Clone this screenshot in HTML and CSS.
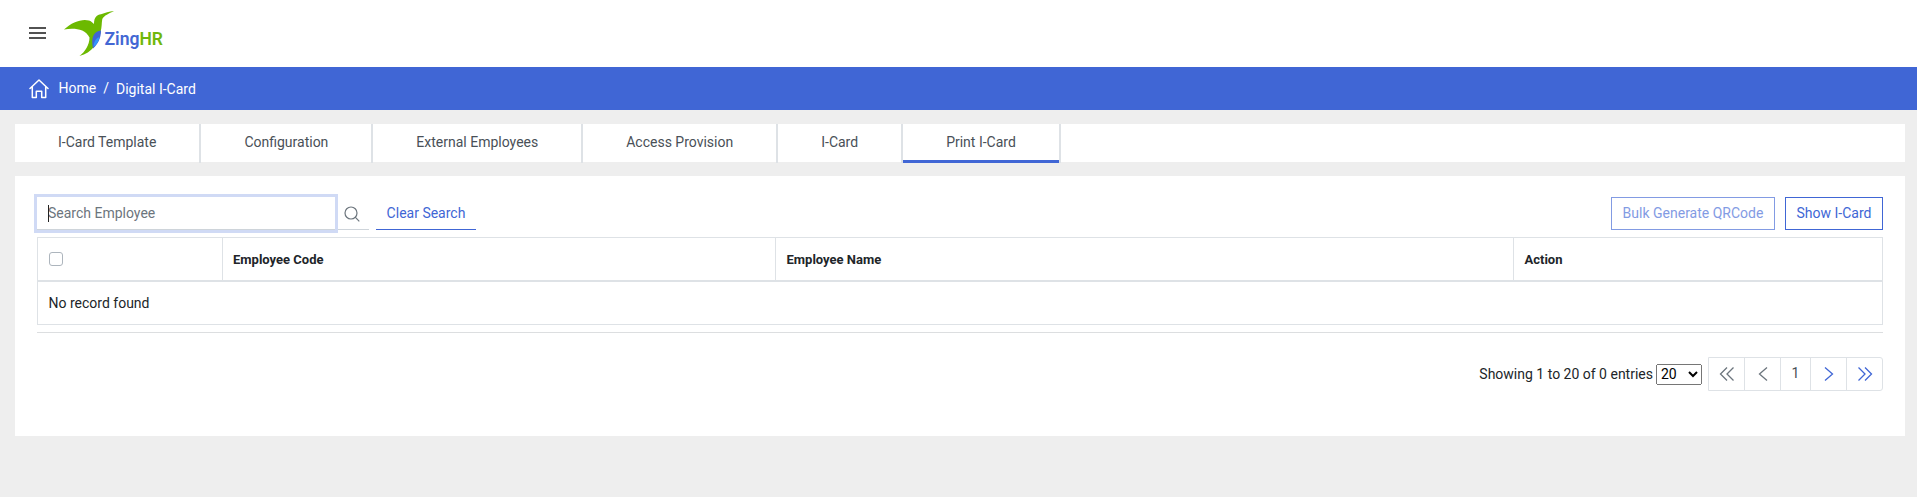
FILE: index.html
```html
<!DOCTYPE html>
<html lang="en">
<head>
<meta charset="utf-8">
<title>Digital I-Card</title>
<link rel="stylesheet" href="styles.css">
</head>
<body>
<header class="topbar">
  <button class="menu" aria-label="Menu"><svg width="17" height="12" viewBox="0 0 17 12" stroke="#1a1a1a" stroke-width="1.700"><path d="M0 1H17M0 6H17M0 11H17"/></svg></button>
  <svg class="logo" width="110" height="50" viewBox="0 0 110 50">
    <path fill="#6cb900" d="M0 19.500C8 12 18 8.500 25 10.500C27 11 28.500 12.500 30 14C30 7 33 4.500 37 4.200C41 3 45 1.500 50 1C45 3.500 40 5.500 38.300 9C37.500 13 38 17 36.500 22C35 32 28 43 15.500 46C21 42 25.500 35 25.500 27.500C21 18.500 10 18 0 19.500Z"/>
    <path fill="#4064d4" d="M37 20.500C30 21.500 26.500 27 29 38.500C34 34 37 28 37 20.500Z"/>
    <path fill="#3296f8" d="M35.500 27C32 28 29.500 32 29.500 37C33 34 35 31 35.500 27Z"/>
    <text x="40.500" y="34.500" textLength="58.500" lengthAdjust="spacingAndGlyphs" class="logo-text"><tspan fill="#4367d4">Zing</tspan><tspan fill="#70b70a">HR</tspan></text>
  </svg>
</header>
<nav class="crumbs">
  <svg width="20" height="20" viewBox="0 0 20 20" fill="none" stroke="#fff" stroke-width="1.500" stroke-linejoin="round" stroke-linecap="round"><path d="M1 9.500L10 1L19 9.500M3.300 7.800V18.500H7.300V12.200H12.700V18.500H16.700V7.800"/></svg>
  <a class="home">Home</a><span class="slash">/</span><span class="current">Digital I-Card</span>
</nav>
<ul class="tabs">
  <li>I-Card Template</li><li>Configuration</li><li>External Employees</li><li>Access Provision</li><li>I-Card</li><li class="active">Print I-Card</li>
</ul>
<main class="card">
  <div class="toolbar">
    <div class="search"><span class="caret"></span><input class="field" type="text" placeholder="Search Employee"></div>
    <button class="find" aria-label="Search"><svg width="16" height="16" viewBox="0 0 16 16" fill="none" stroke="#6c757d" stroke-width="1.200"><circle cx="7" cy="7" r="6"/><path d="M11.200 11.200L15.300 15.300"/></svg></button>
    <button class="clear">Clear Search</button>
    <button class="btn bulk" disabled>Bulk Generate QRCode</button>
    <button class="btn">Show I-Card</button>
  </div>
  <table class="grid">
    <thead><tr><th class="c1"><span class="check"></span></th><th class="c2">Employee Code</th><th class="c3">Employee Name</th><th>Action</th></tr></thead>
    <tbody><tr><td colspan="4">No record found</td></tr></tbody>
  </table>
  <div class="rule"></div>
  <div class="footer">
    <span>Showing 1 to 20 of 0 entries</span>
    <select class="size"><option>20</option></select>
    <ul class="pages">
      <li class="off"><svg width="16" height="16" viewBox="0 0 16 16"><path d="M8 1.500L1.500 8L8 14.500M14.500 1.500L8 8L14.500 14.500"/></svg></li>
      <li class="off"><svg width="16" height="16" viewBox="0 0 16 16"><path d="M12 1.500L4.500 8L12 14.500"/></svg></li>
      <li class="num">1</li>
      <li><svg width="16" height="16" viewBox="0 0 16 16"><path d="M4 1.500L11.500 8L4 14.500"/></svg></li>
      <li><svg width="16" height="16" viewBox="0 0 16 16"><path d="M8 1.500L14.500 8L8 14.500M1.500 1.500L8 8L1.500 14.500"/></svg></li>
    </ul>
  </div>
</main>
</body>
</html>
```
FILE: styles.css
```css
* { box-sizing: border-box; }
body { margin: 0; background: #eee; font: 14px/21px Roboto, sans-serif; color: #212529; }
button { font: inherit; background: none; border: 0; border-radius: 0; padding: 0; }
ul { list-style: none; margin: 0; padding: 0; }
.topbar { height: 67px; background: #fff; display: flex; align-items: flex-start; padding: 10px 0 0 29px; }
.menu { display: flex; width: 17px; margin: 17px 18px 0 0; }
.logo { overflow: visible; }
.logo-text { font: 600 19px Roboto, sans-serif; }
.crumbs { height: 43px; background: #4066d5; color: #fff; display: flex; align-items: center; padding-left: 29px; }
.home { margin-left: 9.5px; }
.slash { margin: 0 7px; }
.current { padding-top: 1px; }
.tabs { display: flex; height: 38px; margin: 14px 12px 14px 15px; background: #fff; }
.tabs li { height: 39px; padding: 8px 43px 0; border-right: 2px solid #dee2e6; color: #495057; white-space: nowrap; }
.tabs .active { box-shadow: inset 0 -3px #4066d5; }
.card { height: 260px; margin: 0 12px 0 15px; background: #fff; padding: 21px 22px 0; }
.toolbar { display: flex; height: 33px; }
.search { display: flex; width: 298px; position: relative; }
.caret { position: absolute; left: 11px; top: 8px; width: 1px; height: 17px; background: #222; }
.field { width: 298px; height: 33px; border: 0; border-bottom: 1px solid #ced4da; padding: 0 11px; font: inherit; outline: 0; box-shadow: 0 0 0 3px #d0daf5; }
.field::placeholder { color: #6c757d; opacity: 1; }
.find { width: 34px; border-bottom: 1px solid #ced4da; display: flex; align-items: center; padding: 1px 0 0 9px; }
.clear { width: 100px; margin-left: 7px; margin-right: auto; color: #4066d5; border-bottom: 1px solid #4066d5; }
.btn { width: 98px; margin-left: 10px; border: 1px solid #4066d5; color: #4066d5; }
.bulk { width: 164px; opacity: .65; }
.grid { width: 100%; table-layout: fixed; border-collapse: collapse; margin-top: 7px; }
.grid th, .grid td { border: 1px solid #dee2e6; padding: 1px 10.5px 0; text-align: left; height: 44px; }
.grid th { height: 43px; font-size: 13px; font-weight: 700; border-bottom-width: 2px; }
.c1 { width: 10%; }
.c2 { width: 30%; }
.c3 { width: 40%; }
.check { display: block; width: 14px; height: 14px; border: 1px solid #adb5bd; border-radius: 3px; }
.rule { height: 1px; background: #dcdee0; margin-top: 7px; }
.footer { display: flex; justify-content: flex-end; align-items: center; margin-top: 24px; height: 34px; }
.size { width: 46px; height: 21px; margin: 0 6px 0 3px; font: inherit; padding: 0; }
.pages { display: flex; height: 34px; border: 1px solid #dee2e6; border-radius: 0 3px 3px 0; }
.pages li { width: 36px; border-right: 1px solid #dee2e6; display: flex; align-items: center; justify-content: center; }
.pages li:last-child { width: 35px; border-right: 0; }
.pages .num { width: 30px; color: #495057; padding-bottom: 2px; }
.pages svg { fill: none; stroke: #4066d5; stroke-width: 1.3; }
.pages .off svg { stroke: #6c757d; }
```
